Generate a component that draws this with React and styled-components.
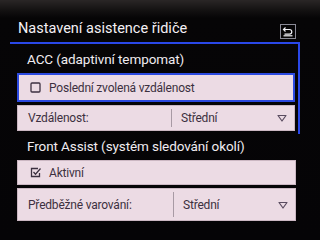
import React from 'react';
import styled, { createGlobalStyle } from 'styled-components';

const GlobalStyle = createGlobalStyle`
  html, body {
    margin: 0;
    padding: 0;
    width: 320px;
    height: 240px;
    overflow: hidden;
    background: #050406;
  }
  * { box-sizing: border-box; }
`;

const Screen = styled.div`
  width: 320px;
  height: 240px;
  display: flex;
  flex-direction: column;
  font-family: Roboto, 'Liberation Sans', sans-serif;
  background: linear-gradient(180deg, #2a2626 0px, #141212 10px, #060506 18px, #050406 100%);
  padding: 18px 20px 0 10px;
`;

const Header = styled.div`
  display: flex;
  align-items: flex-end;
  justify-content: space-between;
  border-bottom: 2px solid #2a48e8;
  padding: 0 4px 2px 8px;
`;

const Title = styled.div`
  color: #f4f0f4;
  font-size: 14.5px;
  line-height: 22px;
`;

const BackButton = styled.div`
  width: 16px;
  height: 15px;
  border: 1px solid #8a8a96;
  display: flex;
  align-items: center;
  justify-content: center;
  margin-bottom: 1px;
`;

const Group = styled.div`
  display: flex;
  flex-direction: column;
  padding: ${p => (p.framed ? '5px 3px 0 7px' : '0 2px 0 7px')};
  border-right: 2px solid ${p => (p.framed ? '#2a48e8' : 'transparent')};
`;

const Section = styled.div`
  color: #f0ecf0;
  font-size: 13.5px;
  letter-spacing: -0.1px;
  line-height: 20px;
  padding: ${p => p.top || 0}px 0 4px 10px;
`;

const Row = styled.div`
  display: flex;
  align-items: center;
  height: ${p => p.h || 26}px;
  margin-bottom: 3px;
  background: #ecdbe4;
  border: ${p => (p.active ? '2px solid #2c4ae0' : '1px solid #cbb7c2')};
  color: #3c3040;
  font-size: 12px;
  letter-spacing: -0.2px;
  padding-left: ${p => (p.active ? 9 : 10)}px;
`;

const Check = styled.span`
  width: 14px;
  height: 14px;
  display: inline-flex;
  align-items: center;
  justify-content: center;
  margin-right: 7px;
`;

const Label = styled.span`
  flex: 0 0 ${p => p.w || 'auto'};
`;

const Value = styled.span`
  flex: 1;
  align-self: stretch;
  display: flex;
  align-items: center;
  border-left: 1px solid #a89aa4;
  padding-left: 9px;
  margin: 3px 0;
`;

const Arrow = styled.span`
  width: 10px;
  margin-right: 7px;
  display: flex;
  align-items: center;
`;

function Box({ checked }) {
  return (
    <Check>
      <svg width="13" height="13" viewBox="0 0 13 13">
        {checked ? (
          <>
            <path d="M9 2.5H2.5v8h8V7" fill="none" stroke="#3c3040" strokeWidth="1.3" />
            <path d="M4.5 6l2 2.2L11.5 2.5" fill="none" stroke="#3c3040" strokeWidth="1.3" />
          </>
        ) : (
          <rect x="2" y="2" width="9" height="9" rx="1" fill="none" stroke="#3c3040" strokeWidth="1.3" />
        )}
      </svg>
    </Check>
  );
}

function Down() {
  return (
    <Arrow>
      <svg width="10" height="8" viewBox="0 0 10 8">
        <path d="M1 1.5h8L5 7z" fill="none" stroke="#5a4c60" strokeWidth="1.2" strokeLinejoin="round" />
      </svg>
    </Arrow>
  );
}

export default function App() {
  return (
    <>
      <GlobalStyle />
      <Screen>
        <Header>
          <Title>Nastavení asistence řidiče</Title>
          <BackButton>
            <svg width="12" height="11" viewBox="0 0 12 11">
              <path d="M3.5 1.5L1.5 3.5L3.5 5.5" fill="none" stroke="#f0f0f4" strokeWidth="1.2" />
              <path d="M1.8 3.5H7.5a2.3 2.3 0 0 1 0 4.6H2.5" fill="none" stroke="#f0f0f4" strokeWidth="1.2" />
              <path d="M1.5 9.8h9" fill="none" stroke="#f0f0f4" strokeWidth="1.2" />
            </svg>
          </BackButton>
        </Header>
        <Group framed>
          <Section>ACC (adaptivní tempomat)</Section>
          <Row active h={29}>
            <Box />
            <Label>Poslední zvolená vzdálenost</Label>
          </Row>
          <Row h={26}>
            <Label w="143px">Vzdálenost:</Label>
            <Value>Střední</Value>
            <Down />
          </Row>
        </Group>
        <Group>
          <Section top={2}>Front Assist (systém sledování okolí)</Section>
          <Row h={25}>
            <Box checked />
            <Label>Aktivní</Label>
          </Row>
          <Row h={33}>
            <Label w="145px">Předběžné varování:</Label>
            <Value>Střední</Value>
            <Down />
          </Row>
        </Group>
      </Screen>
    </>
  );
}
